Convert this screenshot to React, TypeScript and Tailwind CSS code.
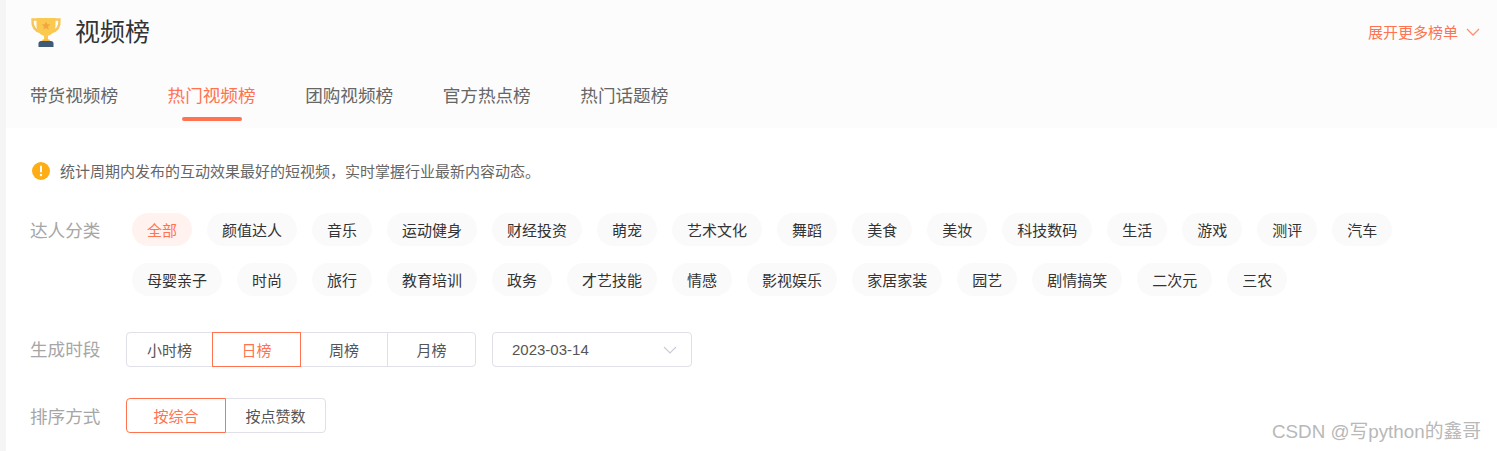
const sans = "font-['Noto_Sans_CJK_SC','Liberation_Sans',sans-serif]";

const row1 = ["全部","颜值达人","音乐","运动健身","财经投资","萌宠","艺术文化","舞蹈","美食","美妆","科技数码","生活","游戏","测评","汽车"];
const row2 = ["母婴亲子","时尚","旅行","教育培训","政务","才艺技能","情感","影视娱乐","家居家装","园艺","剧情搞笑","二次元","三农"];
const tabs = ["带货视频榜","热门视频榜","团购视频榜","官方热点榜","热门话题榜"];

function Trophy() {
  return (
    <svg width="32" height="32" viewBox="0 0 32 32" className="shrink-0">
      <path d="M7 3.500H2.500c-.4 6 1.500 11 8 12.500M25 3.500h4.500c.4 6-1.500 11-8 12.500" fill="none" stroke="#f6c65b" strokeWidth="2.400" />
      <path d="M6.500 2h19v7.500c0 6-4 9.500-7.500 10.300v4.200h-4v-4.200C10.500 19 6.500 15.500 6.500 9.500z" fill="#fbc850" />
      <path d="M16 5.500l1.300 2.800 3 .3-2.300 2 .7 3-2.700-1.600-2.700 1.600.7-3-2.300-2 3-.3z" fill="#f0a73f" />
      <path d="M12.500 23.500h7l.5 1.500h-8z" fill="#f3b54a" />
      <path d="M11 25h10c1.500 0 2.500 1 2.500 2.500V31h-15v-3.500C8.500 26 9.500 25 11 25z" fill="#3f5a74" />
    </svg>
  );
}

function Chip({ text, active }: { text: string; active?: boolean }) {
  return (
    <div className={`h-[33px] px-[15px] pb-px rounded-full flex items-center text-[15px] leading-none ${active ? "bg-[#fff2ef] text-[#ff7350]" : "bg-[#fafafa] text-[#333333]"}`}>
      {text}
    </div>
  );
}

function Segment({ text, w, active, first, last }: { text: string; w: string; active?: boolean; first?: boolean; last?: boolean }) {
  return (
    <div className={`${w} h-[35px] flex items-center justify-center text-[15px] leading-none border -ml-px first:ml-0 ${first ? "rounded-l-[4px]" : ""} ${last ? "rounded-r-[4px]" : ""} ${active ? "relative z-10 border-[#ff7350] text-[#ff7350]" : "border-[#dfe0e8] text-[#555555]"}`}>
      {text}
    </div>
  );
}

export default function App() {
  return (
    <div className={`${sans} relative w-full h-[451px] overflow-hidden bg-[#f5f5f5] pl-[6px]`}>
      <div className="h-full bg-white flex flex-col">
        <div className="h-[128px] bg-[#fcfcfc] pl-[24px] pr-[14px] flex flex-col">
          <div className="h-[64px] flex items-center">
            <Trophy />
            <span className="ml-[13px] pb-[3px] text-[25px] leading-none text-[#333333]">视频榜</span>
            <span className="ml-auto pb-[2px] text-[15px] leading-none text-[#ff7350]">展开更多榜单</span>
            <svg width="14" height="9" viewBox="0 0 14 9" className="ml-[8px] mr-[3px]">
              <path d="M1 1l6 6 6-6" fill="none" stroke="#ff8f73" strokeWidth="1.300" />
            </svg>
          </div>
          <div className="flex gap-[49.6px] h-[64px]">
            {tabs.map((t, i) => (
              <div key={t} className={`relative pt-[19px] text-[17.6px] leading-[24px] ${i === 1 ? "text-[#ff7350]" : "text-[#666666]"}`}>
                {t}
                {i === 1 && <div className="absolute left-[14px] w-[60px] h-[4px] top-[53px] rounded-full bg-[#ff7350]" />}
              </div>
            ))}
          </div>
        </div>

        <div className="pl-[24px] flex flex-col">
          <div className="mt-[33px] h-[20px] flex items-center">
            <svg width="20" height="20" viewBox="0 0 20 20" className="ml-[1px]">
              <circle cx="10" cy="10" r="9" fill="#ffad14" />
              <rect x="9" y="4.500" width="2" height="7" rx="1" fill="#fff" />
              <circle cx="10" cy="14" r="1.200" fill="#fff" />
            </svg>
            <span className="ml-[9px] pb-[2px] text-[15px] leading-none text-[#666666]">统计周期内发布的互动效果最好的短视频，实时掌握行业最新内容动态。</span>
          </div>

          <div className="mt-[32px] flex">
            <div className="w-[102px] h-[33px] flex items-center text-[17.6px] leading-none text-[#a6a6a6]">达人分类</div>
            <div className="flex flex-col gap-[17px]">
              <div className="flex gap-[15px]">
                {row1.map((t, i) => <Chip key={t} text={t} active={i === 0} />)}
              </div>
              <div className="flex gap-[15px]">
                {row2.map((t) => <Chip key={t} text={t} />)}
              </div>
            </div>
          </div>

          <div className="mt-[36px] flex items-center">
            <div className="w-[96px] pb-[2px] text-[17.6px] leading-none text-[#a6a6a6]">生成时段</div>
            <div className="flex">
              <Segment text="小时榜" w="w-[87px]" first />
              <Segment text="日榜" w="w-[89px]" active />
              <Segment text="周榜" w="w-[88px]" />
              <Segment text="月榜" w="w-[89px]" last />
            </div>
            <div className="ml-[16px] w-[200px] h-[35px] border border-[#dfe0e8] rounded-[4px] flex items-center pl-[19px] pr-[14px] justify-between">
              <span className="font-['Liberation_Sans',sans-serif] text-[15px] leading-none text-[#555555]">2023-03-14</span>
              <svg width="14" height="8" viewBox="0 0 14 8">
                <path d="M1 1l6 6 6-6" fill="none" stroke="#c9ccd6" strokeWidth="1.100" />
              </svg>
            </div>
          </div>

          <div className="mt-[31px] flex items-center">
            <div className="w-[96px] text-[17.6px] leading-none text-[#a6a6a6]">排序方式</div>
            <div className="flex">
              <Segment text="按综合" w="w-[100px]" active first />
              <Segment text="按点赞数" w="w-[101px]" last />
            </div>
          </div>
        </div>
      </div>

      <div className="absolute left-[1272px] top-[420px] font-['Liberation_Sans','Noto_Sans_CJK_SC',sans-serif] text-[18.8px] leading-[24px] whitespace-nowrap text-[#b8b8b8]">CSDN @写python的鑫哥</div>
    </div>
  );
}
